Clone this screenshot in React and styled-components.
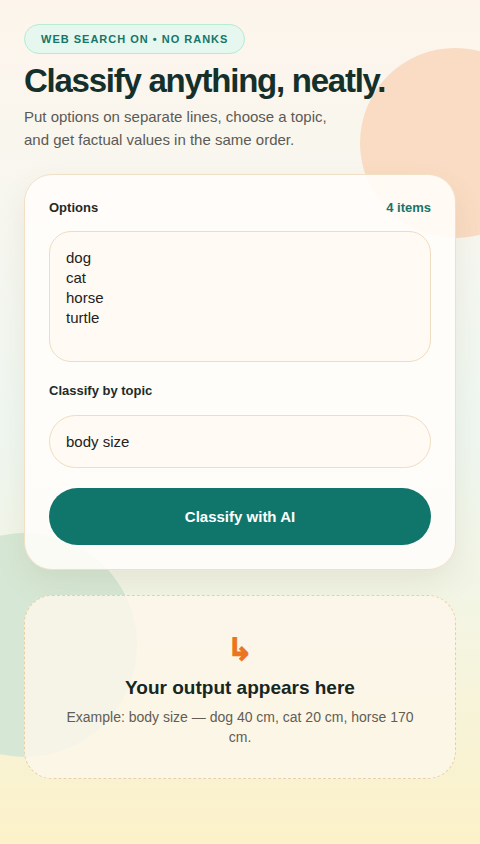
import React from 'react';
import styled, { createGlobalStyle } from 'styled-components';

const GlobalStyle = createGlobalStyle`
  html, body {
    margin: 0;
    padding: 0;
  }
  body {
    font-family: "Liberation Sans", Arial, sans-serif;
    color: #17302a;
  }
`;

const Page = styled.div`
  position: relative;
  min-height: 844px;
  overflow: hidden;
  padding: 24px 24px 40px;
  box-sizing: border-box;
  background: linear-gradient(180deg, #fdf5ec 0%, #f6f7f0 30%, #eff7f1 50%, #f3f5e4 72%, #fcf1c9 100%);
`;

const Blob = styled.div`
  position: absolute;
  border-radius: 50%;
  width: ${p => p.size}px;
  height: ${p => p.size}px;
  left: ${p => p.left}px;
  top: ${p => p.top}px;
  background: ${p => p.color};
  z-index: 0;
`;

const Content = styled.div`
  position: relative;
  z-index: 1;
  display: flex;
  flex-direction: column;
`;

const Badge = styled.span`
  align-self: flex-start;
  display: inline-flex;
  align-items: center;
  height: 28px;
  padding: 0 16px;
  border-radius: 999px;
  background: #e5f7ee;
  border: 1px solid #b9ead3;
  color: #17756a;
  font-size: 11px;
  font-weight: 700;
  letter-spacing: 1px;
  text-transform: uppercase;
`;

const Title = styled.h1`
  margin: 7px 0 0;
  font-size: 33px;
  line-height: 40px;
  font-weight: 700;
  letter-spacing: -1.25px;
  color: #15302a;
`;

const Lead = styled.p`
  margin: 4px 0 0;
  max-width: 320px;
  font-size: 15px;
  line-height: 23px;
  color: #5c5a55;
`;

const Card = styled.section`
  margin-top: 23px;
  padding: 24px 24px 24px;
  border-radius: 28px;
  background: rgba(255, 253, 250, 0.9);
  border: 1px solid #f1dfc6;
  box-shadow: 0 14px 30px rgba(120, 100, 60, 0.1);
  display: flex;
  flex-direction: column;
`;

const LabelRow = styled.div`
  display: flex;
  justify-content: space-between;
  align-items: center;
  height: 16px;
`;

const Label = styled.label`
  font-size: 13px;
  font-weight: 700;
  color: #1f2b28;
`;

const Count = styled.span`
  font-size: 13px;
  font-weight: 700;
  color: #17756a;
`;

const fieldBase = `
  width: 100%;
  box-sizing: border-box;
  background: #fffaf4;
  border: 1px solid #f0dcc0;
  font-family: "Liberation Sans", Arial, sans-serif;
  font-size: 15px;
  color: #222;
  outline: none;
  padding: 0 16px;
`;

const TextArea = styled.textarea`
  ${fieldBase}
  margin-top: 16px;
  height: 131px;
  padding-top: 16px;
  line-height: 20px;
  border-radius: 22px;
  resize: none;
  display: block;
`;

const Input = styled.input`
  ${fieldBase}
  margin-top: 16px;
  height: 53px;
  border-radius: 999px;
`;

const TopicLabel = styled(Label)`
  display: block;
  margin-top: 21px;
  line-height: 16px;
`;

const Button = styled.button`
  margin-top: 20px;
  height: 57px;
  border: none;
  border-radius: 999px;
  background: #10766c;
  color: #fff;
  font-family: "Liberation Sans", Arial, sans-serif;
  font-size: 15px;
  font-weight: 700;
  cursor: pointer;
`;

const Output = styled.section`
  margin-top: 25px;
  padding: 35px 32px 31px;
  border-radius: 28px;
  border: 1px dashed #e9cfa6;
  background: rgba(253, 247, 234, 0.82);
  display: flex;
  flex-direction: column;
  align-items: center;
  text-align: center;
`;

const Arrow = styled.div`
  font-size: 31px;
  line-height: 36px;
  font-weight: 700;
  color: #ea7420;
  -webkit-text-stroke: 1px #ea7420;
  font-family: "DejaVu Sans", sans-serif;
`;

const OutputTitle = styled.h2`
  margin: 9px 0 0;
  font-size: 19px;
  line-height: 24px;
  font-weight: 700;
  color: #17261f;
`;

const OutputText = styled.p`
  margin: 7px 0 0;
  font-size: 14px;
  line-height: 20px;
  color: #625d55;
`;

export default function App() {
  return (
    <Page>
      <GlobalStyle />
      <Blob size={190} left={360} top={48} color="#f9dcc3" />
      <Blob size={224} left={-87} top={533} color="#d6e8d5" />
      <Content>
        <Badge>Web search on • no ranks</Badge>
        <Title>Classify anything, neatly.</Title>
        <Lead>Put options on separate lines, choose a topic, and get factual values in the same order.</Lead>
        <Card>
          <LabelRow>
            <Label>Options</Label>
            <Count>4 items</Count>
          </LabelRow>
          <TextArea defaultValue={'dog\ncat\nhorse\nturtle'} />
          <TopicLabel>Classify by topic</TopicLabel>
          <Input defaultValue="body size" />
          <Button>Classify with AI</Button>
        </Card>
        <Output>
          <Arrow>↳</Arrow>
          <OutputTitle>Your output appears here</OutputTitle>
          <OutputText>Example: body size — dog 40 cm, cat 20 cm, horse 170 cm.</OutputText>
        </Output>
      </Content>
    </Page>
  );
}
